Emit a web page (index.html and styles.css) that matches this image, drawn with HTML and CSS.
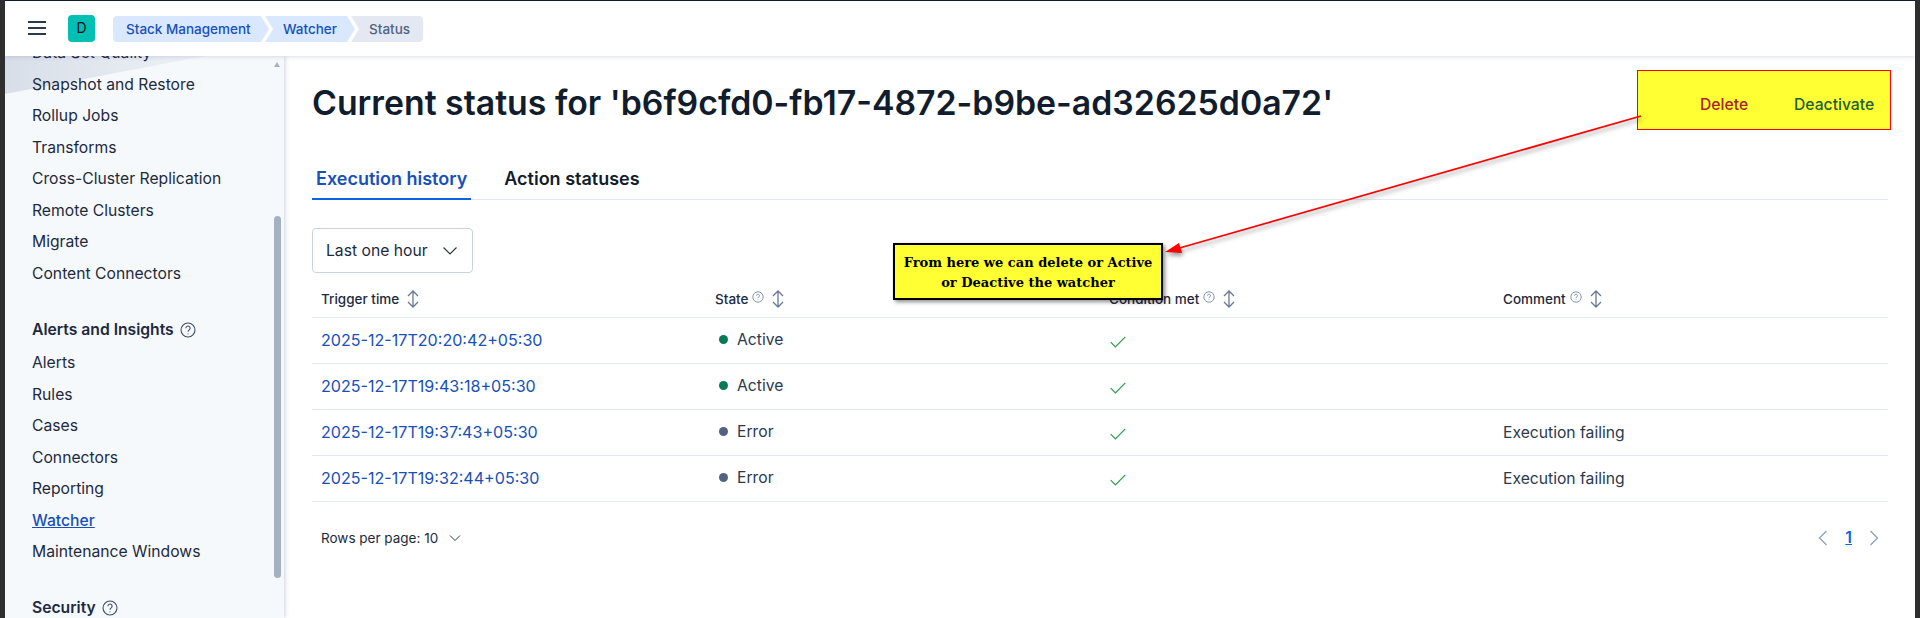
FILE: index.html
```html
<!DOCTYPE html>
<html>
<head>
  <link rel="stylesheet" href="styles.css">
</head>
<body>
  <header class="topbar">
    <button class="menu-btn"><span></span><span></span><span></span></button>
    <div class="avatar">D</div>
    <nav class="crumbs">
      <a class="crumb crumb-first">Stack Management</a>
      <a class="crumb crumb-mid">Watcher</a>
      <a class="crumb crumb-last">Status</a>
    </nav>
  </header>

  <div class="layout">
    <aside class="sidebar">
      <div class="wedge"></div>
      <div class="nav-scroll">
        <a class="nav-item">Data Set Quality</a>
        <a class="nav-item">Snapshot and Restore</a>
        <a class="nav-item">Rollup Jobs</a>
        <a class="nav-item">Transforms</a>
        <a class="nav-item">Cross-Cluster Replication</a>
        <a class="nav-item">Remote Clusters</a>
        <a class="nav-item">Migrate</a>
        <a class="nav-item">Content Connectors</a>
        <div class="nav-title">Alerts and Insights
          <svg class="nav-help" viewBox="0 0 16 16"><circle cx="8" cy="8" r="7"/><path d="M5.9 6.2a2.1 2.1 0 1 1 3.3 1.7c-.8.5-1.2 1-1.2 1.8"/><path d="M8 11.4v.9"/></svg>
        </div>
        <a class="nav-item">Alerts</a>
        <a class="nav-item">Rules</a>
        <a class="nav-item">Cases</a>
        <a class="nav-item">Connectors</a>
        <a class="nav-item">Reporting</a>
        <a class="nav-item active">Watcher</a>
        <a class="nav-item">Maintenance Windows</a>
        <div class="nav-title">Security
          <svg class="nav-help" viewBox="0 0 16 16"><circle cx="8" cy="8" r="7"/><path d="M5.9 6.2a2.1 2.1 0 1 1 3.3 1.7c-.8.5-1.2 1-1.2 1.8"/><path d="M8 11.4v.9"/></svg>
        </div>
      </div>
      <div class="scrollbar">
        <div class="scroll-up"></div>
        <div class="scroll-thumb"></div>
      </div>
    </aside>

    <main class="content">
      <h1 class="page-title">Current status for 'b6f9cfd0-fb17-4872-b9be-ad32625d0a72'</h1>

      <div class="tabs">
        <a class="tab selected">Execution history</a>
        <a class="tab">Action statuses</a>
      </div>

      <div class="range-select">
        <span>Last one hour</span>
        <svg class="chevron" viewBox="0 0 16 16"><path d="M1.5 4.5 8 11l6.5-6.5"/></svg>
      </div>

      <table class="history">
        <thead>
          <tr>
            <th><span class="th-inner">Trigger time <svg class="sort" viewBox="0 0 14 18"><path d="M7 1v16M2 6l5-5 5 5M2 12l5 5 5-5"/></svg></span></th>
            <th><span class="th-inner">State <svg class="tip" viewBox="0 0 12 12"><circle cx="6" cy="6" r="5.2"/><path d="M4.5 4.7a1.5 1.5 0 1 1 2.4 1.2c-.6.4-.9.7-.9 1.3M6 8.4v.7"/></svg> <svg class="sort" viewBox="0 0 14 18"><path d="M7 1v16M2 6l5-5 5 5M2 12l5 5 5-5"/></svg></span></th>
            <th><span class="th-inner">Condition met <svg class="tip" viewBox="0 0 12 12"><circle cx="6" cy="6" r="5.2"/><path d="M4.5 4.7a1.5 1.5 0 1 1 2.4 1.2c-.6.4-.9.7-.9 1.3M6 8.4v.7"/></svg> <svg class="sort" viewBox="0 0 14 18"><path d="M7 1v16M2 6l5-5 5 5M2 12l5 5 5-5"/></svg></span></th>
            <th><span class="th-inner">Comment <svg class="tip" viewBox="0 0 12 12"><circle cx="6" cy="6" r="5.2"/><path d="M4.5 4.7a1.5 1.5 0 1 1 2.4 1.2c-.6.4-.9.7-.9 1.3M6 8.4v.7"/></svg> <svg class="sort" viewBox="0 0 14 18"><path d="M7 1v16M2 6l5-5 5 5M2 12l5 5 5-5"/></svg></span></th>
          </tr>
        </thead>
        <tbody>
          <tr>
            <td><a class="time-link">2025-12-17T20:20:42+05:30</a></td>
            <td><span class="state"><i class="dot dot-ok"></i>Active</span></td>
            <td><svg class="check" viewBox="0 0 16 12"><path d="M.7 6.2 5.4 11 15.3.8"/></svg></td>
            <td></td>
          </tr>
          <tr>
            <td><a class="time-link">2025-12-17T19:43:18+05:30</a></td>
            <td><span class="state"><i class="dot dot-ok"></i>Active</span></td>
            <td><svg class="check" viewBox="0 0 16 12"><path d="M.7 6.2 5.4 11 15.3.8"/></svg></td>
            <td></td>
          </tr>
          <tr>
            <td><a class="time-link">2025-12-17T19:37:43+05:30</a></td>
            <td><span class="state"><i class="dot dot-err"></i>Error</span></td>
            <td><svg class="check" viewBox="0 0 16 12"><path d="M.7 6.2 5.4 11 15.3.8"/></svg></td>
            <td>Execution failing</td>
          </tr>
          <tr>
            <td><a class="time-link">2025-12-17T19:32:44+05:30</a></td>
            <td><span class="state"><i class="dot dot-err"></i>Error</span></td>
            <td><svg class="check" viewBox="0 0 16 12"><path d="M.7 6.2 5.4 11 15.3.8"/></svg></td>
            <td>Execution failing</td>
          </tr>
        </tbody>
      </table>

      <div class="table-foot">
        <div class="rows-per-page">Rows per page: 10
          <svg class="chevron-small" viewBox="0 0 12 12"><path d="M1 3.5 6 8.5l5-5"/></svg>
        </div>
        <div class="pager">
          <svg class="pager-arrow" viewBox="0 0 10 16"><path d="M8.5 1 1.5 8l7 7"/></svg>
          <a class="page-num">1</a>
          <svg class="pager-arrow" viewBox="0 0 10 16"><path d="M1.5 1l7 7-7 7"/></svg>
        </div>
      </div>
    </main>
  </div>

  <!-- screenshot annotations drawn on top of the page -->
  <div class="highlight-box">
    <span class="act-delete">Delete</span>
    <span class="act-deactivate">Deactivate</span>
  </div>
  <svg class="arrow" width="1920" height="618" viewBox="0 0 1920 618">
    <g class="arrow-group">
      <line class="arrow-line" x1="1641" y1="116" x2="1176" y2="249"/>
      <polygon class="arrow-head" points="1165,252 1179,243 1182,253"/>
    </g>
  </svg>
  <div class="callout">From here we can delete or Active<br>or Deactive the watcher</div>
</body>
</html>
```

FILE: styles.css
```css
* {
  box-sizing: border-box;
}

html, body {
  height: 618px;
  overflow: hidden;
}

body {
  margin: 0;
  background: #fff;
  font-family: Inter, sans-serif;
  font-size: 16px;
  color: #1d2a3e;
  border-left: 5px solid #2e2e2e;
  border-right: 5px solid #2e2e2e;
  display: flex;
  flex-direction: column;
}

/* top bar */
.topbar {
  height: 56px;
  flex: none;
  display: flex;
  align-items: center;
  padding: 1px 0 0 23px;
  background: #fff;
  border-top: 1px solid #0f1a2e;
  box-shadow: 0 1px 4px rgba(60, 80, 120, 0.18);
  position: relative;
  z-index: 2;
}

.menu-btn {
  width: 18px;
  height: 14px;
  margin-bottom: 2px;
  padding: 0;
  border: none;
  background: none;
  display: flex;
  flex-direction: column;
  justify-content: space-between;
}

.menu-btn span {
  display: block;
  height: 2px;
  background: #2b394f;
}

.avatar {
  width: 27px;
  height: 27px;
  margin-left: 22px;
  margin-bottom: 1px;
  border-radius: 4px;
  background: #00bfb3;
  color: #07101f;
  font-size: 14px;
  text-align: center;
  line-height: 25px;
}

.crumbs {
  display: flex;
  margin-left: 18px;
  height: 26px;
}

.crumb {
  display: flex;
  align-items: center;
  font-size: 13.5px;
  font-weight: 500;
  color: #1750ba;
  background: #d9e8ff;
}

.crumb-first {
  width: 156px;
  padding-left: 13px;
  border-radius: 4px 0 0 4px;
  clip-path: polygon(0 0, calc(100% - 8px) 0, 100% 50%, calc(100% - 8px) 100%, 0 100%);
}

.crumb-mid {
  width: 90px;
  margin-left: -4px;
  padding-left: 18px;
  clip-path: polygon(0 0, calc(100% - 8px) 0, 100% 50%, calc(100% - 8px) 100%, 0 100%, 8px 50%);
}

.crumb-last {
  width: 72px;
  margin-left: -4px;
  padding-left: 18px;
  color: #516381;
  background: #e3e8f2;
  border-radius: 0 4px 4px 0;
  clip-path: polygon(0 0, 100% 0, 100% 100%, 0 100%, 8px 50%);
}

/* sidebar */
.layout {
  flex: 1;
  display: flex;
  min-height: 0;
}

.sidebar {
  width: 279px;
  flex: none;
  position: relative;
  overflow: hidden;
  background: #f6f9fc;
  box-shadow: 1px 0 4px rgba(60, 80, 120, 0.25);
  z-index: 1;
}

.wedge {
  position: absolute;
  top: 0;
  left: 0;
  width: 200px;
  height: 38px;
  background: linear-gradient(to right, #d8dee8, #eef2f7);
  clip-path: polygon(0 0, 100% 0, 0 100%);
}

.nav-scroll {
  position: relative;
  margin-top: -19px;
  padding-left: 27px;
  display: flex;
  flex-direction: column;
}

.nav-item {
  height: 31.5px;
  line-height: 31.5px;
  font-size: 15.7px;
  color: #1d2a3e;
}

.nav-item.active {
  color: #1750ba;
  font-weight: 500;
  text-decoration: underline;
}

.nav-title {
  display: flex;
  align-items: center;
  gap: 6px;
  margin-top: 22px;
  height: 36px;
  font-size: 15.7px;
  font-weight: 600;
  color: #1d2a3e;
}

.nav-help {
  width: 16px;
  height: 16px;
  margin-top: 1px;
  fill: none;
  stroke: #3d4c63;
  stroke-width: 1.1;
}

.scrollbar {
  position: absolute;
  top: 0;
  bottom: 0;
  right: 3px;
  width: 7px;
}

.scroll-up {
  position: absolute;
  top: 6px;
  left: 0;
  width: 0;
  height: 0;
  border-left: 3.5px solid transparent;
  border-right: 3.5px solid transparent;
  border-bottom: 5px solid #a5b1c2;
}

.scroll-thumb {
  position: absolute;
  top: 160px;
  left: 0;
  width: 7px;
  height: 362px;
  border-radius: 4px;
  background: #a5b1c2;
}

/* main content */
.content {
  flex: 1;
  min-width: 0;
  padding: 0 27px 0 28px;
}

.page-title {
  margin: 17px 0 0;
  height: 60px;
  line-height: 60px;
  font-size: 33.8px;
  font-weight: 600;
  color: #111c2d;
}

.tabs {
  display: flex;
  gap: 29px;
  margin-top: 15px;
  height: 52px;
  border-bottom: 1px solid #e3e8f2;
}

.tab {
  height: 52px;
  padding: 20px 4px 0;
  font-size: 18px;
  line-height: 22px;
  font-weight: 600;
  color: #111c2d;
}

.tab.selected {
  color: #1750ba;
  border-bottom: 2px solid #0b64dd;
}

.range-select {
  width: 161px;
  height: 45px;
  margin-top: 28px;
  padding: 0 14px 0 13px;
  display: flex;
  align-items: center;
  justify-content: space-between;
  border: 1px solid #cad3e2;
  border-radius: 4px;
  font-size: 15.7px;
}

.chevron {
  width: 16px;
  height: 16px;
  fill: none;
  stroke: #2b394f;
  stroke-width: 1.2;
}

.history {
  width: 100%;
  margin-top: 4px;
  border-collapse: collapse;
  table-layout: fixed;
}

.history th {
  height: 40px;
  padding: 5px 9px 0;
  text-align: left;
  font-size: 13.5px;
  font-weight: 500;
  color: #1d2a3e;
  border-bottom: 1px solid #e3e8f2;
}

.history td {
  height: 46px;
  padding: 0 9px;
  font-size: 15.7px;
  color: #2b394f;
  border-bottom: 1px solid #e3e8f2;
}

.th-inner {
  display: inline-flex;
  align-items: center;
  gap: 4px;
}

.sort {
  width: 14px;
  height: 18px;
  fill: none;
  stroke: #67789a;
  stroke-width: 1.3;
  margin-left: 3px;
}

.tip {
  width: 12px;
  height: 12px;
  margin-bottom: 4px;
  fill: none;
  stroke: #67789a;
  stroke-width: 0.8;
}

.time-link {
  color: #1750ba;
  font-size: 16.1px;
  font-weight: 400;
}

.state {
  display: flex;
  align-items: center;
  padding-left: 4px;
  gap: 9px;
  margin-top: -2px;
}

.dot {
  width: 9px;
  height: 9px;
  border-radius: 50%;
}

.dot-ok {
  background: #077a55;
}

.dot-err {
  background: #516381;
}

.check {
  display: block;
  width: 16px;
  height: 12px;
  margin: 4px 0 0 1px;
  fill: none;
  stroke: #2a9d4a;
  stroke-width: 1.2;
}

.table-foot {
  display: flex;
  align-items: center;
  justify-content: space-between;
  margin-top: 18px;
  padding: 0 9px;
  height: 36px;
}

.rows-per-page {
  display: flex;
  align-items: center;
  gap: 11px;
  font-size: 13.5px;
  color: #1d2a3e;
}

.chevron-small {
  width: 12px;
  height: 12px;
  fill: none;
  stroke: #2b394f;
}

.pager {
  display: flex;
  align-items: center;
  gap: 17px;
}

.pager-arrow {
  width: 10px;
  height: 16px;
  fill: none;
  stroke: #8b9bb8;
  stroke-width: 1.2;
}

.page-num {
  font-size: 15.7px;
  font-weight: 600;
  color: #0b64dd;
  text-decoration: underline;
}

/* annotations */
.highlight-box {
  position: absolute;
  left: 1637px;
  top: 70px;
  width: 254px;
  height: 60px;
  background: #ffff33;
  border: 1px solid #f00;
  font-size: 15.7px;
  font-weight: 500;
}

.act-delete {
  position: absolute;
  left: 62px;
  top: 24px;
  color: #a6242a;
}

.act-deactivate {
  position: absolute;
  left: 156px;
  top: 24px;
  color: #1d6136;
}

.arrow {
  position: absolute;
  left: 0;
  top: 0;
  pointer-events: none;
}

.arrow-group {
  filter: drop-shadow(1px 3px 2px rgba(0, 0, 0, 0.4));
}

.arrow-line {
  stroke: #f00;
  stroke-width: 1.8;
}

.arrow-head {
  fill: #f00;
}

.callout {
  position: absolute;
  left: 893px;
  top: 243px;
  width: 270px;
  height: 57px;
  padding-top: 8px;
  background: #ffff33;
  border: 2px solid #000;
  box-shadow: 2px 2px 4px rgba(0, 0, 0, 0.45);
  font-family: "DejaVu Serif", serif;
  font-size: 13px;
  font-weight: 700;
  line-height: 19.5px;
  text-align: center;
  color: #000;
}
```
